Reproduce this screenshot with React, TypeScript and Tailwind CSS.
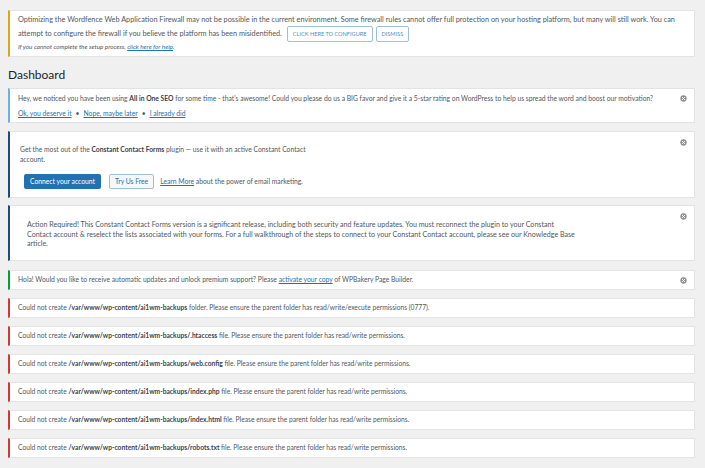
import React from "react";

const errorFiles = [
  { path: "/var/www/wp-content/ai1wm-backups", tail: " folder. Please ensure the parent folder has read/write/execute permissions (0777)." },
  { path: "/var/www/wp-content/ai1wm-backups/.htaccess", tail: " file. Please ensure the parent folder has read/write permissions." },
  { path: "/var/www/wp-content/ai1wm-backups/web.config", tail: " file. Please ensure the parent folder has read/write permissions." },
  { path: "/var/www/wp-content/ai1wm-backups/index.php", tail: " file. Please ensure the parent folder has read/write permissions." },
  { path: "/var/www/wp-content/ai1wm-backups/index.html", tail: " file. Please ensure the parent folder has read/write permissions." },
  { path: "/var/www/wp-content/ai1wm-backups/robots.txt", tail: " file. Please ensure the parent folder has read/write permissions." },
];

function CloseIcon({ className }: { className: string }) {
  return (
    <button className={`absolute right-[7px] ${className}`} aria-label="Dismiss">
      <svg width="7" height="7" viewBox="0 0 20 20">
        <circle cx="10" cy="10" r="9" fill="#8c8f94" />
        <path d="M6.5 6.5l7 7M13.5 6.5l-7 7" stroke="#fff" strokeWidth="2.6" strokeLinecap="round" />
      </svg>
    </button>
  );
}

export default function App() {
  return (
    <div className="min-h-[468px] bg-[#f0f0f1] pt-[10px] pl-[8px] pr-[10px] text-[6.75px] text-[#50575e] font-['Lato',sans-serif]">
      {/* Wordfence */}
      <div className="bg-white border border-[#e2e3e5] border-l-2 border-l-[#dba617] pl-[8px] pt-[3px] pb-[4px] text-[7.3px]">
        <p className="leading-[12px]">
          Optimizing the Wordfence Web Application Firewall may not be possible in the current environment. Some firewall rules cannot offer full protection on your hosting platform, but many will still work. You can
        </p>
        <div className="flex items-center h-[16px]">
          <span>attempt to configure the firewall if you believe the platform has been misidentified.</span>
          <button className="ml-[5px] h-[16px] px-[5px] border border-[#9fbfd6] rounded-[2px] text-[5.6px] text-[#4d8fbd] uppercase">
            Click here to configure
          </button>
          <button className="ml-[3px] h-[16px] px-[5px] border border-[#9fbfd6] rounded-[2px] text-[5.6px] text-[#4d8fbd] uppercase">
            Dismiss
          </button>
        </div>
        <p className="italic text-[6.3px] leading-[10px]">
          If you cannot complete the setup process, <a className="text-[#2271b1] underline">click here for help</a>.
        </p>
      </div>

      <h1 className="mt-[10px] text-[12px] leading-[16px] text-[#1d2327]">Dashboard</h1>

      {/* All in One SEO */}
      <div className="relative mt-[5px] bg-white border border-[#e2e3e5] border-l-2 border-l-[#72aee6] pl-[8px] pt-[3px] pb-[3px]">
        <p className="leading-[12px]">
          Hey, we noticed you have been using <b className="font-bold text-[#3c434a]">All in One SEO</b> for some time - that's awesome! Could you please do us a BIG favor and give it a 5-star rating on WordPress to help us spread the word and boost our motivation?
        </p>
        <p className="mt-[3px] leading-[12px]">
          <a className="text-[#2271b1] underline">Ok, you deserve it</a>
          <span className="mx-[4px]">•</span>
          <a className="text-[#2271b1] underline">Nope, maybe later</a>
          <span className="mx-[4px]">•</span>
          <a className="text-[#2271b1] underline">I already did</a>
        </p>
        <CloseIcon className="top-[6px]" />
      </div>

      {/* Constant Contact */}
      <div className="relative mt-[8px] bg-white border border-[#e2e3e5] border-l-2 border-l-[#1f4a7d] pl-[10px] pt-[12px] pb-[8px]">
        <p className="leading-[10px]">
          Get the most out of the <b className="font-bold text-[#3c434a]">Constant Contact Forms</b> plugin — use it with an active Constant Contact
          <br />
          account.
        </p>
        <div className="mt-[10px] flex items-center">
          <button className="h-[15px] px-[6px] ml-[4px] bg-[#2271b1] text-white rounded-[2px]">Connect your account</button>
          <button className="h-[15px] px-[5px] ml-[8px] bg-[#f6f7f7] border border-[#9fbfd6] text-[#2271b1] rounded-[2px]">
            Try Us Free
          </button>
          <span className="ml-[6px]">
            <a className="text-[#2271b1] underline">Learn More</a> about the power of email marketing.
          </span>
        </div>
        <CloseIcon className="top-[7px]" />
      </div>

      {/* Action Required */}
      <div className="relative mt-[7px] bg-white border border-[#e2e3e5] border-l-2 border-l-[#1f4a7d] pl-[17px] pt-[14px] pb-[11px] text-[7.1px]">
        <p className="leading-[9.5px]">
          Action Required! This Constant Contact Forms version is a significant release, including both security and feature updates. You must reconnect the plugin to your Constant
          <br />
          Contact account &amp; reselect the lists associated with your forms. For a full walkthrough of the steps to connect to your Constant Contact account, please see our Knowledge Base
          <br />
          article.
        </p>
        <CloseIcon className="top-[7px]" />
      </div>

      {/* WPBakery */}
      <div className="relative mt-[9px] h-[20px] flex items-center bg-white border border-[#e2e3e5] border-l-2 border-l-[#00a32a] pl-[8px]">
        <p>
          Hola! Would you like to receive automatic updates and unlock premium support? Please{" "}
          <a className="text-[#2271b1] underline">activate your copy</a> of WPBakery Page Builder.
        </p>
        <CloseIcon className="top-[6px]" />
      </div>

      {errorFiles.map((e, i) => (
        <div
          key={i}
          className="mt-[8px] h-[20px] flex items-center bg-white border border-[#e2e3e5] border-l-2 border-l-[#d63638] pl-[8px] text-[6.7px]"
        >
          <p>
            Could not create <b className="font-bold text-[#3c434a]">{e.path}</b>
            {e.tail}
          </p>
        </div>
      ))}
    </div>
  );
}
